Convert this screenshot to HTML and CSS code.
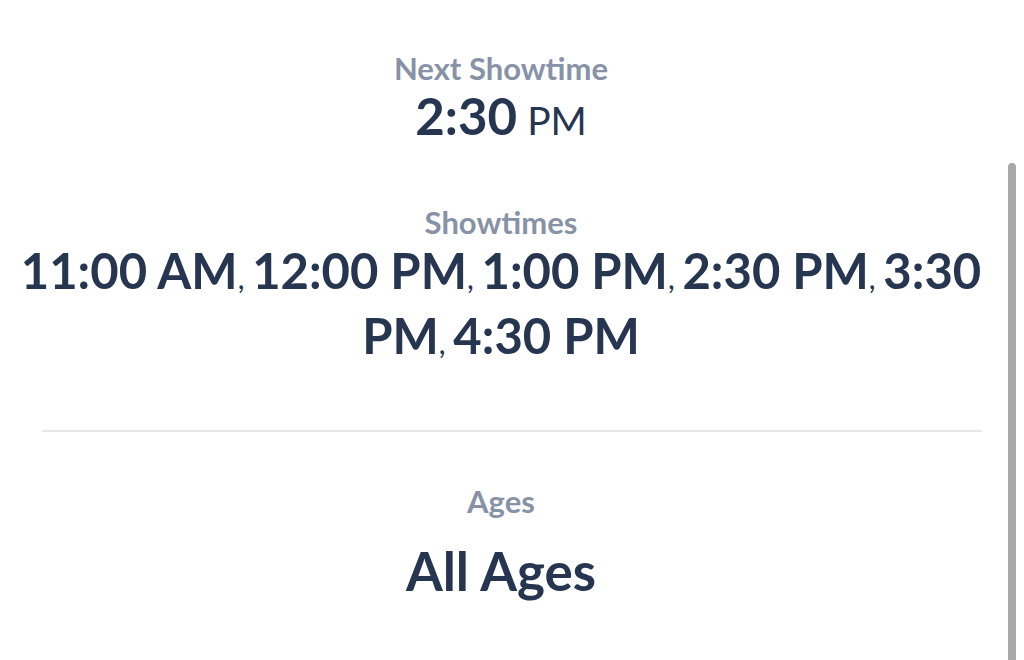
FILE: index.html
```html
<!DOCTYPE html>
<html lang="en">
<head>
<meta charset="utf-8">
<title>Showtimes</title>
<link rel="stylesheet" href="styles.css">
</head>
<body>
<main class="page">
  <section class="block next">
    <div class="label">Next Showtime</div>
    <div class="next-time"><span class="hm">2:30</span> <span class="ampm">PM</span></div>
  </section>
  <section class="block times">
    <div class="label">Showtimes</div>
    <div class="times-list">11:00 AM<span class="sep">, </span>12:00 PM<span class="sep">, </span>1:00 PM<span class="sep">, </span>2:30 PM<span class="sep">, </span>3:30 PM<span class="sep">, </span>4:30 PM</div>
  </section>
  <hr class="divider">
  <section class="block ages">
    <div class="label">Ages</div>
    <div class="ages-value">All Ages</div>
  </section>
</main>
<div class="scrollbar"></div>
</body>
</html>
```
FILE: styles.css
```css
html, body {
  margin: 0;
  padding: 0;
  background: #ffffff;
  overflow: hidden;
}
body {
  font-family: Lato, "Noto Sans", sans-serif;
  color: #263550;
  width: 1024px;
  height: 660px;
}
.page {
  width: 1002px;
  padding-top: 50px;
  display: flex;
  flex-direction: column;
  align-items: stretch;
}
.block {
  text-align: center;
}
.label {
  font-size: 31px;
  line-height: 36px;
  font-weight: 700;
  color: #8792a7;
}
.next-time {
  font-size: 51px;
  line-height: 56px;
  margin-top: 2px;
}
.hm {
  font-weight: 700;
}
.ampm {
  font-size: 39px;
  font-weight: 400;
  line-height: 1;
  margin-left: -3px;
}
.times {
  margin-top: 60px;
}
.times-list {
  font-size: 49px;
  font-weight: 700;
  line-height: 65px;
  padding: 0 8px;
  margin-top: -2px;
}
.sep {
  font-size: 30px;
  font-weight: 400;
  line-height: 1;
}
.divider {
  border: 0;
  height: 2px;
  background: #e5e9ee;
  margin: 62px 20px 0 42px;
}
.ages {
  margin-top: 51px;
}
.ages-value {
  font-size: 53px;
  font-weight: 700;
  line-height: 60px;
  margin-top: 22px;
}
.scrollbar {
  position: absolute;
  left: 1008px;
  top: 163px;
  width: 8px;
  height: 520px;
  border-radius: 4px;
  background: #a9a9a9;
}
```
